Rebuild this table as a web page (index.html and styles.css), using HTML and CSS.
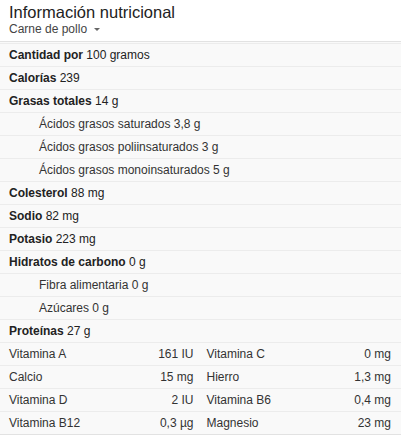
FILE: index.html
```html
<!DOCTYPE html>
<html lang="es">
<head>
    <meta charset="UTF-8">
    <meta name="viewport" content="width=device-width, initial-scale=1.0">
    <title>Información nutricional</title>
    <link rel="stylesheet" href="styles.css">
</head>
<body>
    <div class="header">
        <h1>Información nutricional</h1>
        <div class="food">Carne de pollo <span class="arrow"></span></div>
    </div>

    <!-- Tabla principal -->
    <div class="facts">
        <div class="row"><b>Cantidad por</b> 100 gramos</div>
        <div class="row"><b>Calorías</b> 239</div>
        <div class="row"><b>Grasas totales</b> 14 g</div>
        <div class="row sub">Ácidos grasos saturados 3,8 g</div>
        <div class="row sub">Ácidos grasos poliinsaturados 3 g</div>
        <div class="row sub">Ácidos grasos monoinsaturados 5 g</div>
        <div class="row"><b>Colesterol</b> 88 mg</div>
        <div class="row"><b>Sodio</b> 82 mg</div>
        <div class="row"><b>Potasio</b> 223 mg</div>
        <div class="row"><b>Hidratos de carbono</b> 0 g</div>
        <div class="row sub">Fibra alimentaria 0 g</div>
        <div class="row sub">Azúcares 0 g</div>
        <div class="row"><b>Proteínas</b> 27 g</div>

        <div class="row vit">
            <div class="cell"><span>Vitamina A</span><span>161 IU</span></div>
            <div class="cell"><span>Vitamina C</span><span>0 mg</span></div>
        </div>
        <div class="row vit">
            <div class="cell"><span>Calcio</span><span>15 mg</span></div>
            <div class="cell"><span>Hierro</span><span>1,3 mg</span></div>
        </div>
        <div class="row vit">
            <div class="cell"><span>Vitamina D</span><span>2 IU</span></div>
            <div class="cell"><span>Vitamina B6</span><span>0,4 mg</span></div>
        </div>
        <div class="row vit">
            <div class="cell"><span>Vitamina B12</span><span>0,3 µg</span></div>
            <div class="cell"><span>Magnesio</span><span>23 mg</span></div>
        </div>
    </div>
</body>
</html>
```

FILE: styles.css
```css
body {
    margin: 0;
    font-family: "Liberation Sans", Arial, sans-serif;
    font-size: 12px;
    color: #222;
    background: #fff;
}
.header {
    height: 41px;
    padding-left: 9px;
    box-sizing: border-box;
}
h1 {
    margin: 0;
    padding-top: 3px;
    font-size: 16.5px;
    font-weight: normal;
    line-height: 19px;
    color: #222;
}
.food {
    font-size: 12px;
    line-height: 15px;
    color: #444;
}
.arrow {
    display: inline-block;
    margin-left: 4px;
    vertical-align: middle;
    border-left: 3px solid transparent;
    border-right: 3px solid transparent;
    border-top: 3px solid #666;
}
.facts {
    border-top: 1px solid #e2e2e2;
    padding-top: 1px;
    background: #f9f9f9;
}
.row {
    height: 22px;
    line-height: 22px;
    padding: 0 10px 0 9px;
    border-top: 1px solid #ececec;
    white-space: nowrap;
}
.row:last-child {
    border-bottom: 1px solid #e2e2e2;
}
.row b {
    font-weight: bold;
    color: #222;
}
.sub {
    padding-left: 39px;
    color: #333;
}
.vit {
    display: grid;
    grid-template-columns: 1fr 1fr;
    column-gap: 13px;
    color: #333;
}
.cell {
    display: flex;
    justify-content: space-between;
}
```
